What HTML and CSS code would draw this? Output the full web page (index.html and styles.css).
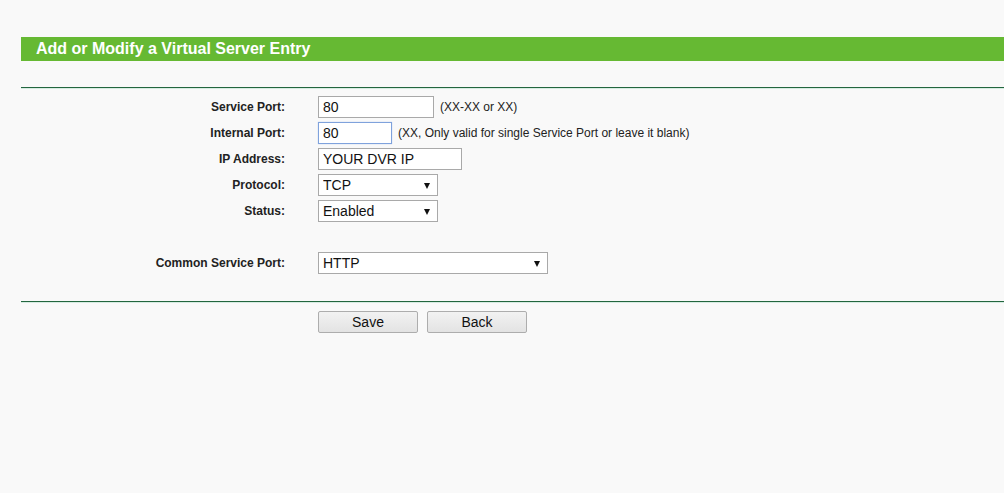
FILE: index.html
```html
<!DOCTYPE html>
<html>
<head>
<meta charset="utf-8">
<title>Add or Modify a Virtual Server Entry</title>
<link rel="stylesheet" href="styles.css">
</head>
<body>
<div class="page">
  <div class="title-bar">Add or Modify a Virtual Server Entry</div>
  <div class="divider"></div>
  <form class="form">
    <div class="rows">
      <div class="row">
        <label class="label">Service Port:</label>
        <div class="field"><input class="text w116" type="text" value="80"><span class="hint">(XX-XX or XX)</span></div>
      </div>
      <div class="row">
        <label class="label">Internal Port:</label>
        <div class="field"><input class="text w74 focused" type="text" value="80"><span class="hint">(XX, Only valid for single Service Port or leave it blank)</span></div>
      </div>
      <div class="row">
        <label class="label">IP Address:</label>
        <div class="field"><input class="text w144" type="text" value="YOUR DVR IP"></div>
      </div>
      <div class="row">
        <label class="label">Protocol:</label>
        <div class="field"><div class="select w120"><select><option>TCP</option></select></div></div>
      </div>
      <div class="row">
        <label class="label">Status:</label>
        <div class="field"><div class="select w120"><select><option>Enabled</option></select></div></div>
      </div>
    </div>
    <div class="row common">
      <label class="label">Common Service Port:</label>
      <div class="field"><div class="select w230"><select><option>HTTP</option></select></div></div>
    </div>
  </form>
  <div class="divider bottom"></div>
  <div class="buttons">
    <button class="btn" type="button">Save</button>
    <button class="btn" type="button">Back</button>
  </div>
</div>
</body>
</html>
```

FILE: styles.css
```css
html, body {
  margin: 0;
  padding: 0;
  background: #f9f9f9;
  font-family: Arial, "Liberation Sans", sans-serif;
  color: #222;
}

.page {
  padding: 37px 0 0 21px;
}

.title-bar {
  height: 24px;
  line-height: 24px;
  background: #66b933;
  color: #fff;
  font-weight: bold;
  font-size: 16px;
  padding-left: 15px;
}

.divider {
  margin-top: 26px;
  border-top: 1px solid #23663f;
  border-bottom: 1px solid #d6ece2;
}

.divider.bottom {
  margin-top: 27px;
}

.form {
  margin: 7px 0 0 0;
}

.rows {
  display: flex;
  flex-direction: column;
  gap: 4px;
}

.row {
  display: flex;
  align-items: center;
  height: 22px;
  gap: 33px;
}

.row.common {
  margin-top: 30px;
}

.label {
  width: 264px;
  flex: none;
  text-align: right;
  font-weight: bold;
  font-size: 12px;
  color: #222;
}

.field {
  display: flex;
  align-items: center;
  gap: 6px;
}

.hint {
  font-size: 12px;
  color: #222;
}

.text {
  box-sizing: border-box;
  height: 22px;
  margin: 0;
  padding: 0 4px;
  border: 1px solid #a9a9a9;
  background: #fff;
  font-family: Arial, "Liberation Sans", sans-serif;
  font-size: 14px;
  color: #111;
  outline: none;
}

.text.focused {
  border-color: #7fa2dc;
  box-shadow: 0 0 1px #a9c2ea;
}

.w116 { width: 116px; }
.w74 { width: 74px; }
.w144 { width: 144px; }

.select {
  position: relative;
  box-sizing: border-box;
  height: 22px;
}

.select.w120 { width: 120px; }
.select.w230 { width: 230px; }

.select select {
  -webkit-appearance: none;
  appearance: none;
  box-sizing: border-box;
  width: 100%;
  height: 22px;
  margin: 0;
  padding: 0 4px;
  border: 1px solid #a9a9a9;
  border-radius: 0;
  background: #fff;
  font-family: Arial, "Liberation Sans", sans-serif;
  font-size: 14px;
  color: #111;
  outline: none;
}

.select::after {
  content: "";
  position: absolute;
  right: 8px;
  top: 9px;
  width: 0;
  height: 0;
  border-left: 3.5px solid transparent;
  border-right: 3.5px solid transparent;
  border-top: 6px solid #111;
  pointer-events: none;
}

.buttons {
  display: flex;
  gap: 9px;
  margin: 8px 0 0 297px;
}

.btn {
  box-sizing: border-box;
  width: 100px;
  height: 22px;
  margin: 0;
  padding: 0;
  border: 1px solid #adadad;
  border-radius: 2px;
  background: linear-gradient(#f2f2f2, #e3e3e3);
  font-family: Arial, "Liberation Sans", sans-serif;
  font-size: 14px;
  color: #111;
}
```
